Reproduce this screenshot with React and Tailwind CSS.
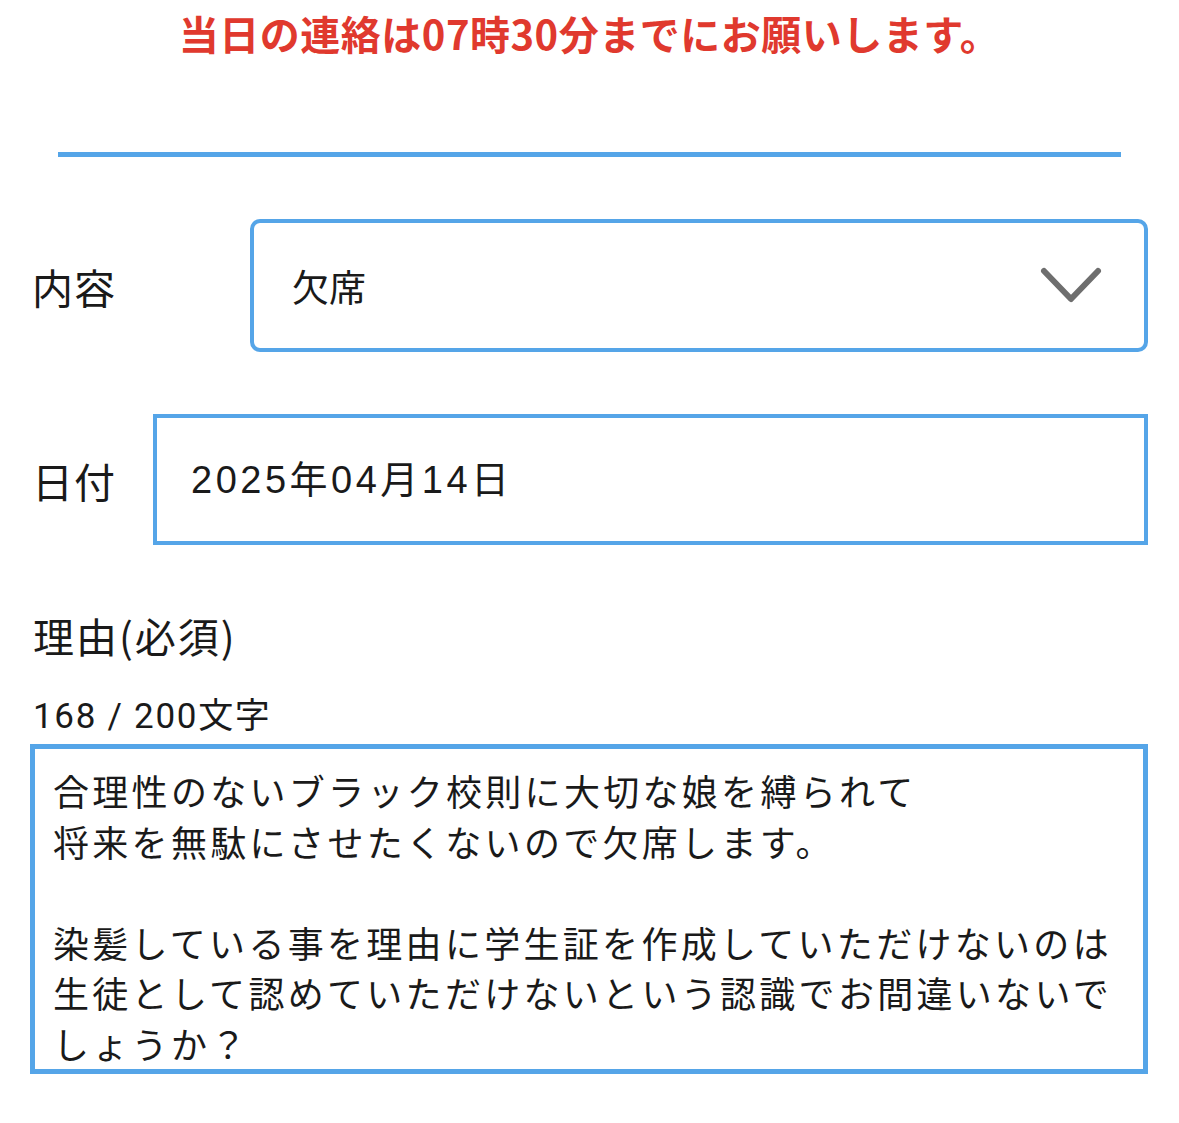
import React from "react";

export default function App() {
  const lines = [
    "合理性のないブラック校則に大切な娘を縛られて",
    "将来を無駄にさせたくないので欠席します。",
    "\u00a0",
    "染髪している事を理由に学生証を作成していただけないのは",
    "生徒として認めていただけないという認識でお間違いないで",
    "しょうか？",
  ];
  return (
    <div className="w-[1179px] h-[1123px] bg-white text-[#1a1a1a] overflow-hidden font-['Noto_Sans_CJK_JP',sans-serif]">
      <div className="pt-[9px] text-center text-[40px] leading-[48px] font-bold text-[#e0392e] tracking-[0.5px]">
        当日の連絡は07時30分までにお願いします。
      </div>
      <div className="mt-[95px] ml-[58px] w-[1063px] h-[5px] bg-[#55a5e8]" />

      <div className="mt-[62px] flex items-center">
        <div className="w-[250px] pl-[32px] text-[41px] leading-[48px] tracking-[1px]">内容</div>
        <div className="w-[898px] h-[133px] border-4 border-[#55a5e8] rounded-[10px] flex items-center justify-between pl-[38px] pr-[42px]">
          <span className="text-[37px] leading-[44px]">欠席</span>
          <svg width="62" height="38" viewBox="0 0 62 38">
            <polyline points="4,4 31,32 58,4" fill="none" stroke="#6e6e6e" strokeWidth="6" strokeLinecap="round" strokeLinejoin="round" />
          </svg>
        </div>
      </div>

      <div className="mt-[62px] flex items-center">
        <div className="w-[153px] pl-[32px] text-[41px] leading-[48px] tracking-[1px]">日付</div>
        <div className="w-[995px] h-[131px] border-4 border-[#55a5e8] flex items-center pl-[34px]">
          <span className="text-[38px] leading-[46px] tracking-[3.5px] font-['Liberation_Sans','Noto_Sans_CJK_JP',sans-serif]">2025年04月14日</span>
        </div>
      </div>

      <div className="mt-[66px] pl-[33px] text-[41px] leading-[48px] tracking-[2px]">理由(必須)</div>
      <div className="mt-[38px] pl-[33px] text-[35px] leading-[40px] tracking-[1.7px] font-['Roboto','Noto_Sans_CJK_JP',sans-serif]">168 / 200文字</div>

      <div className="mt-[7px] ml-[30px] w-[1118px] h-[330px] border-[5px] border-[#55a5e8] pt-[16px] pl-[18px]">
        {lines.map((l, i) => (
          <div key={i} className="text-[36px] leading-[50.6px] tracking-[3.3px] whitespace-nowrap">
            {l}
          </div>
        ))}
      </div>
    </div>
  );
}
